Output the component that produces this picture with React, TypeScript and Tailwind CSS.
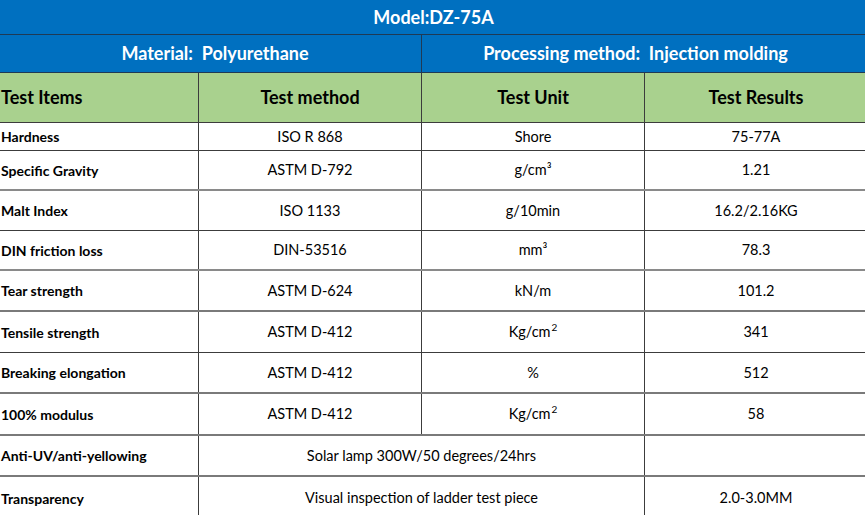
import React from "react";

type Row = { item: string; method?: React.ReactNode; unit?: React.ReactNode; result: React.ReactNode; span?: React.ReactNode; h: string; b: string };

const Sup2 = ({ base }: { base: string }) => (
  <span>
    {base}
    <span className="text-[10px] relative -top-[6px] ml-[1px]">2</span>
  </span>
);

const rows: Row[] = [
  { item: "Hardness", method: "ISO R 868", unit: "Shore", result: "75-77A", h: "h-[28px]", b: "border-b border-[#3c3c3c]" },
  { item: "Specific Gravity", method: "ASTM D-792", unit: "g/cm³", result: "1.21", h: "h-[40px]", b: "border-b-2 border-[#8a8a8a]" },
  { item: "Malt Index", method: "ISO 1133", unit: "g/10min", result: "16.2/2.16KG", h: "h-[40px]", b: "border-b border-[#3c3c3c]" },
  { item: "DIN friction loss", method: "DIN-53516", unit: "mm³", result: "78.3", h: "h-[40px]", b: "border-b-2 border-[#8a8a8a]" },
  { item: "Tear strength", method: "ASTM D-624", unit: "kN/m", result: "101.2", h: "h-[41px]", b: "border-b-2 border-[#7a7a7a]" },
  { item: "Tensile strength", method: "ASTM D-412", unit: <Sup2 base="Kg/cm" />, result: "341", h: "h-[41px]", b: "border-b border-[#3c3c3c]" },
  { item: "Breaking elongation", method: "ASTM D-412", unit: "%", result: "512", h: "h-[41px]", b: "border-b-2 border-[#7a7a7a]" },
  { item: "100% modulus", method: "ASTM D-412", unit: <Sup2 base="Kg/cm" />, result: "58", h: "h-[42px]", b: "border-b-2 border-[#7a7a7a]" },
  { item: "Anti-UV/anti-yellowing", span: "Solar lamp 300W/50 degrees/24hrs", result: "", h: "h-[41px]", b: "border-b-2 border-[#7a7a7a]" },
  { item: "Transparency", span: "Visual inspection of ladder test piece", result: "2.0-3.0MM", h: "h-[42px]", b: "" },
];

export default function App() {
  return (
    <div className="w-[865px] h-[515px] overflow-hidden bg-white" style={{ fontFamily: "Lato, 'Open Sans', sans-serif" }}>
      <div className="w-[867px]">
        <div className="h-[35px] bg-[#0070c0] border-b border-[#1f3a55] flex items-center justify-center text-white font-bold text-[18px]">
          Model:DZ-75A
        </div>
        <div className="h-[38px] bg-[#0070c0] border-b border-[#1f3a55] flex text-white font-bold text-[18px]">
          <div className="w-[422px] border-r border-[#1f3a55] flex items-center justify-center pl-[9px]">Material:&nbsp; Polyurethane</div>
          <div className="flex-1 flex items-center justify-center pr-[18px]">Processing method:&nbsp; Injection molding</div>
        </div>
        <div className="h-[50px] bg-[#a9d18e] border-b border-[#3c3c3c] flex font-bold text-[18px] text-black">
          <div className="w-[199px] border-r border-[#3c3c3c] flex items-center pl-[1px]">Test Items</div>
          <div className="w-[223px] border-r border-[#3c3c3c] flex items-center justify-center">Test method</div>
          <div className="w-[223px] border-r border-[#3c3c3c] flex items-center justify-center">Test Unit</div>
          <div className="flex-1 flex items-center justify-center">Test Results</div>
        </div>
        {rows.map((r, i) => (
          <div key={i} className={`${r.h} ${r.b} flex text-[14.5px] text-black`}>
            <div className="w-[199px] border-r border-[#3c3c3c] flex items-center pl-[1px] font-bold text-[14px]">{r.item}</div>
            {r.span !== undefined ? (
              <div className="w-[446px] border-r border-[#3c3c3c] flex items-center justify-center">{r.span}</div>
            ) : (
              <>
                <div className="w-[223px] border-r border-[#3c3c3c] flex items-center justify-center">{r.method}</div>
                <div className="w-[223px] border-r border-[#3c3c3c] flex items-center justify-center">{r.unit}</div>
              </>
            )}
            <div className="flex-1 flex items-center justify-center">{r.result}</div>
          </div>
        ))}
      </div>
    </div>
  );
}
